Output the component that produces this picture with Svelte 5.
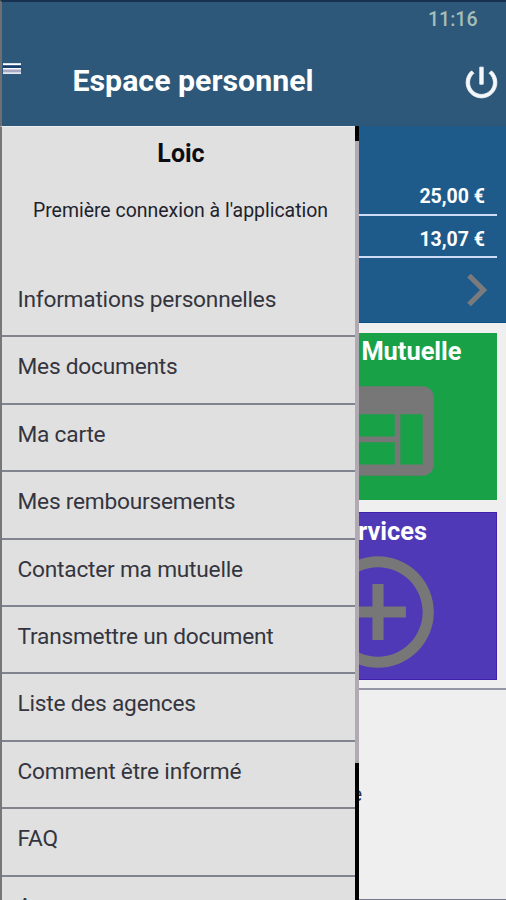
<script>
  const entries = [
    'Informations personnelles',
    'Mes documents',
    'Ma carte',
    'Mes remboursements',
    'Contacter ma mutuelle',
    'Transmettre un document',
    'Liste des agences',
    'Comment être informé',
    'FAQ',
    'A propos'
  ];
  const amounts = ['25,00 €', '13,07 €'];
</script>

<div class="app">
  <header>
    <div class="status"><span>11:16</span></div>
    <div class="toolbar">
      <svg class="menu" width="19" height="12" viewBox="0 0 19 12">
        <rect y="2" width="18" height="3" fill="#163d70" />
        <rect y="6" width="18" height="4" fill="#a9a9c4" />
        <rect y="0.2" width="18" height="2" fill="#fff" />
        <rect y="5" width="18" height="1.4" fill="#fff" />
        <rect y="9.3" width="18" height="1.7" fill="#e4eaf0" />
      </svg>
      <h1>Espace personnel</h1>
      <svg class="power" width="41" height="41" viewBox="0 0 24 24" fill="#f5f8fb" stroke="#f5f8fb" stroke-width="0.5">
        <path d="M13 3h-2v10h2V3zm4.83 2.17l-1.42 1.42C17.99 7.86 19 9.81 19 12c0 3.87-3.13 7-7 7s-7-3.13-7-7c0-2.19 1.01-4.14 2.58-5.42L6.17 5.17C4.23 6.82 3 9.26 3 12c0 4.97 4.03 9 9 9s9-4.03 9-9c0-2.74-1.23-5.18-3.17-6.83z" />
      </svg>
    </div>
  </header>

  <main>
    <section class="summary">
      {#each amounts as amount}
        <div class="amount">{amount}</div>
      {/each}
      <svg class="chevron" width="20" height="34" viewBox="0 0 20 34">
        <path d="M2 2.5L16.5 17L2 31.5" fill="none" stroke="#7b7b7d" stroke-width="5.2" />
      </svg>
    </section>
    <section class="tiles">
      <article class="tile green">
        <h2 class="card-title">Mutuelle</h2>
        <svg width="134" height="134" viewBox="0 0 24 24" fill="#777">
          <path d="M20 4H4c-1.1 0-1.99.9-1.99 2L2 18c0 1.1.9 2 2 2h16c1.1 0 2-.9 2-2V6c0-1.1-.9-2-2-2zm-5 14H4v-4h11v4zm0-5H4V9h11v4zm5 5h-4V9h4v9z" />
        </svg>
      </article>
      <article class="tile purple">
        <h2>Services</h2>
        <svg width="134" height="134" viewBox="0 0 24 24" fill="#777">
          <path d="M13 7h-2v4H7v2h4v4h2v-4h4v-2h-4V7zm-1-5C6.48 2 2 6.48 2 12s4.48 10 10 10 10-4.48 10-10S17.52 2 12 2zm0 18c-4.41 0-8-3.59-8-8s3.59-8 8-8 8 3.59 8 8-3.59 8-8 8z" />
        </svg>
      </article>
    </section>
    <section class="news"><span>e</span></section>
  </main>

  <aside>
    <div class="panel">
      <div class="profile">
        <strong>Loic</strong>
        <p>Première connexion à l'application</p>
      </div>
      <nav>
        {#each entries as entry}
          <div class="entry"><span>{entry}</span></div>
        {/each}
      </nav>
    </div>
    <div class="scroll"></div>
  </aside>
</div>

<style>
  :global(body) { margin: 0; }
  * { box-sizing: border-box; }
  .app {
    position: relative;
    width: 506px;
    height: 900px;
    overflow: hidden;
    display: flex;
    flex-direction: column;
    background: #efefef;
    font-family: Roboto, "Liberation Sans", sans-serif;
  }
  header {
    height: 126px;
    flex: none;
    background: #2d5879;
    border-top: 2px solid #17304f;
    border-left: 2px solid #6d6f73;
  }
  .status {
    height: 35px;
    display: flex;
    justify-content: flex-end;
    padding-right: 28.5px;
    color: #a5bfb8;
    font-size: 19.5px;
    line-height: 36px;
    font-weight: 500;
  }
  .toolbar {
    display: flex;
    height: 89px;
  }
  .menu { margin: 26px 0 0 0.5px; flex: none; }
  h1 {
    margin: 26px 0 0 51px;
    width: 388px;
    font-size: 30.3px;
    line-height: 36px;
    font-weight: 700;
    color: #fff;
    white-space: nowrap;
  }
  .power { margin: 24.5px 0 0 0; flex: none; }
  main {
    flex: 1;
    display: flex;
    flex-direction: column;
  }
  .summary {
    height: 197px;
    padding: 47px 9px 0 259px;
    background: #1e5b8a;
    border-bottom: 1px solid #0a4f86;
    display: flex;
    flex-direction: column;
  }
  .amount {
    height: 42.5px;
    border-bottom: 2px solid #cfdcf6;
    padding-right: 12px;
    text-align: right;
    color: #fff;
    font-weight: 700;
    font-size: 19.5px;
    line-height: 47px;
  }
  .chevron { align-self: flex-end; margin: 15px 10px 0 0; flex: none; }
  .tiles {
    height: 367px;
    padding: 9.5px 9.5px 0 259px;
    display: flex;
    flex-direction: column;
    gap: 12px;
    border-bottom: 2px solid #9697a6;
  }
  .tile {
    height: 167.5px;
    display: flex;
    flex-direction: column;
    align-items: center;
    flex: none;
  }
  .green { background: #18a147; }
  .purple { background: #5039b7; border: 1px solid #3f20ad; }
  h2 {
    margin: 0;
    height: 31.5px;
    color: #fff;
    font-size: 25.4px;
    line-height: 37px;
    font-weight: 700;
  }
  .card-title { align-self: flex-end; margin-right: 35px; }
  .news {
    flex: 1;
    border-bottom: 1px solid #777b8b;
    padding: 92px 144px 0 0;
    text-align: right;
    color: #26324a;
    font-size: 20px;
    line-height: 24px;
  }
  aside {
    position: absolute;
    left: 0;
    top: 126px;
    width: 359px;
    height: 774px;
    display: flex;
  }
  .panel {
    width: 355px;
    background: #e0e0e0;
    border-left: 2px solid #77777b;
    border-top: 1px solid #ededed;
    overflow: hidden;
  }
  .profile {
    height: 143px;
    display: flex;
    flex-direction: column;
    align-items: center;
    color: #0c0c14;
  }
  strong {
    margin-top: 11px;
    padding-left: 5px;
    font-size: 25px;
    line-height: 32px;
  }
  p {
    margin: 27px 0 0 4px;
    font-size: 19.45px;
    line-height: 28px;
    white-space: nowrap;
    color: #20222c;
  }
  .entry {
    height: 67.4px;
    border-bottom: 2px solid #81838f;
    padding-left: 15.5px;
    font-size: 22.7px;
    letter-spacing: -0.22px;
    line-height: 60px;
    color: #34353e;
    white-space: nowrap;
  }
  .scroll {
    width: 4px;
    background: linear-gradient(#000 15px, #b2aab2 15px, #b2aab2 637px, #000 637px);
  }
</style>
